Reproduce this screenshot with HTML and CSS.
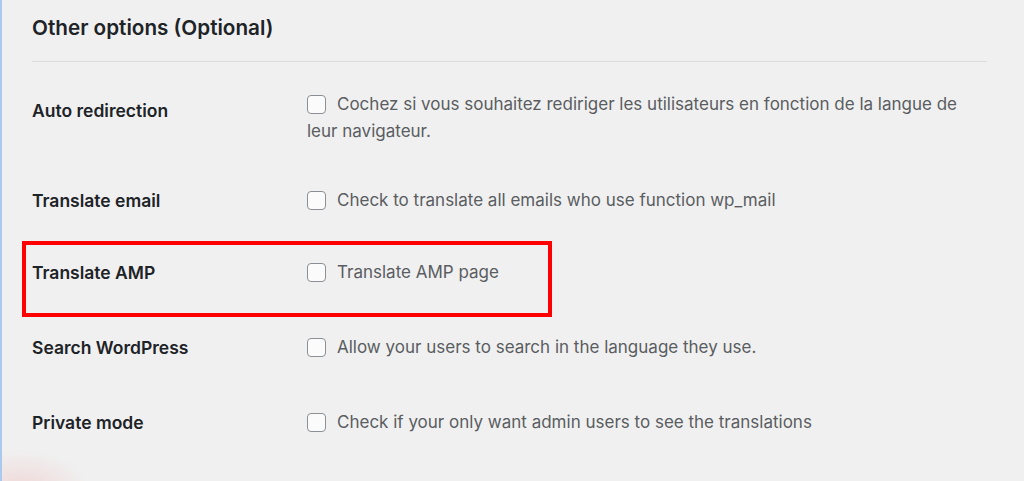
FILE: index.html
```html
<!DOCTYPE html>
<html lang="fr">
<head>
    <meta charset="UTF-8">
    <meta name="viewport" content="width=device-width, initial-scale=1.0">
    <title>Other options</title>
    <link rel="stylesheet" href="styles.css">
</head>
<body>
    <div class="page">
        <h2 class="section-title">Other options (Optional)</h2>

        <div class="options">
            <div class="row row-tall">
                <div class="label label-low">Auto redirection</div>
                <label class="desc"><span class="box"></span>Cochez si vous souhaitez rediriger les utilisateurs en fonction de la langue de leur navigateur.</label>
            </div>
            <div class="row">
                <div class="label">Translate email</div>
                <label class="desc"><span class="box"></span>Check to translate all emails who use function wp_mail</label>
            </div>
            <div class="row highlighted">
                <div class="label">Translate AMP</div>
                <label class="desc"><span class="box"></span>Translate AMP page</label>
                <!-- encadré rouge -->
                <div class="mark"></div>
            </div>
            <div class="row">
                <div class="label">Search WordPress</div>
                <label class="desc"><span class="box"></span>Allow your users to search in the language they use.</label>
            </div>
            <div class="row">
                <div class="label">Private mode</div>
                <label class="desc"><span class="box"></span>Check if your only want admin users to see the translations</label>
            </div>
        </div>
    </div>
</body>
</html>
```

FILE: styles.css
```css
html, body {
    height: 100%;
}

body {
    margin: 0;
    font-family: Inter, "Noto Sans", sans-serif;
    color: #1d2327;
    background-color: #f0f0f0;
    background-image: radial-gradient(ellipse 70px 40px at 20px 490px, rgba(240, 170, 170, 0.35), rgba(240, 240, 240, 0));
    border-left: 2px solid #a9c9ee;
    box-sizing: border-box;
    overflow: hidden;
}

.page {
    padding-left: 30px;
}

.section-title {
    margin: 0 37px 0 0;
    padding: 14px 0 19px;
    font-size: 20.7px;
    line-height: 28px;
    font-weight: 600;
    border-bottom: 1px solid #dcdcdc;
}

.options {
    padding-top: 5px;
}

.row {
    display: grid;
    grid-template-columns: 275px 680px;
    padding: 24px 0;
}

.row-tall {
    padding-bottom: 18px;
}

.highlighted {
    position: relative;
    padding-top: 21px;
}

.label {
    font-size: 17.5px;
    line-height: 27px;
    font-weight: 600;
    color: #1d2327;
}

.label-low {
    padding-top: 6px;
}

.desc {
    font-size: 17px;
    line-height: 27px;
    color: #5a5d61;
}

.box {
    display: inline-block;
    width: 17px;
    height: 17px;
    margin-right: 11px;
    vertical-align: -4px;
    border: 1.5px solid #8c8f94;
    border-radius: 4px;
    background: #fbfbfb;
}

.mark {
    position: absolute;
    left: -10px;
    top: 3px;
    width: 522px;
    height: 68px;
    border: 4px solid #ff0000;
}
```
